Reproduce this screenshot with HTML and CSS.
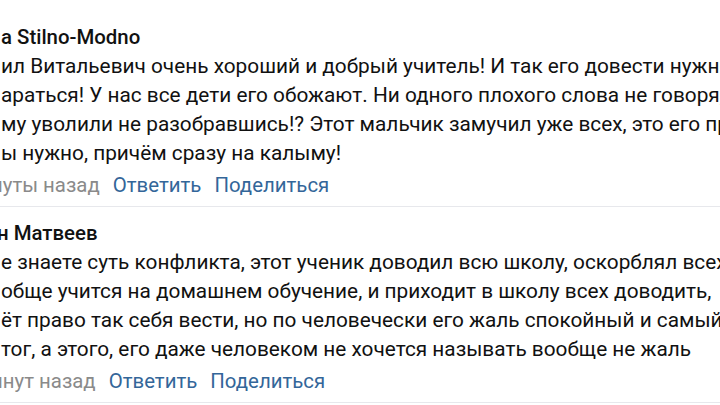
FILE: index.html
```html
<!DOCTYPE html>
<html lang="ru">
<head>
<meta charset="utf-8">
<title>Комментарии</title>
<link rel="stylesheet" href="styles.css">
</head>
<body>
<div class="feed">
  <div class="prev">
    <div class="prev-inner"><span class="link">Поделиться</span></div>
  </div>

  <div class="comment">
    <div class="name">a Stilno-Modno</div>
    <div class="text">
      <div class="line">ил Витальевич очень хороший и добрый учитель! И так его довести нужно</div>
      <div class="line">араться! У нас все дети его обожают. Ни одного плохого слова не говоря,</div>
      <div class="line">му уволили не разобравшись!? Этот мальчик замучил уже всех, это его проблема</div>
      <div class="line">ы нужно, причём сразу на калыму!</div>
    </div>
    <div class="actions">
      <span class="time">нуты назад</span>
      <span class="link">Ответить</span>
      <span class="link">Поделиться</span>
    </div>
  </div>

  <div class="comment">
    <div class="name name-cut">н Матвеев</div>
    <div class="text">
      <div class="line">е знаете суть конфликта, этот ученик доводил всю школу, оскорблял всех</div>
      <div class="line">обще учится на домашнем обучение, и приходит в школу всех доводить,</div>
      <div class="line">ёт право так себя вести, но по человечески его жаль спокойный и самый</div>
      <div class="line">тог, а этого, его даже человеком не хочется называть вообще не жаль</div>
    </div>
    <div class="actions">
      <span class="time">инут назад</span>
      <span class="link">Ответить</span>
      <span class="link">Поделиться</span>
    </div>
  </div>
</div>
</body>
</html>
```

FILE: styles.css
```css
html, body {
  margin: 0;
  padding: 0;
  background: #ffffff;
}

body {
  font-family: Roboto, "Noto Sans", "Liberation Sans", sans-serif;
  font-size: 20.4px;
  color: #111111;
  width: 720px;
  height: 405px;
  overflow: hidden;
}

.feed {
  width: 720px;
  overflow: hidden;
}

.prev {
  height: 11px;
  overflow: hidden;
}

.prev-inner {
  line-height: 29px;
  margin-top: -26px;
  margin-left: -30px;
}

.comment {
  padding: 12px 0 6px 1px;
  border-bottom: 1px solid #e7e8ec;
}

.name {
  font-weight: 500;
  line-height: 29px;
  white-space: nowrap;
}

.name-cut {
  margin-left: -4px;
}

.text {
  font-size: 20.8px;
  line-height: 29px;
}

.line {
  white-space: nowrap;
}

.actions {
  margin-top: 3px;
  line-height: 29px;
  white-space: nowrap;
  display: flex;
  gap: 13px;
}

.time {
  color: #8a8a8a;
  margin-left: -10px;
}

.link {
  color: #336699;
}
```
